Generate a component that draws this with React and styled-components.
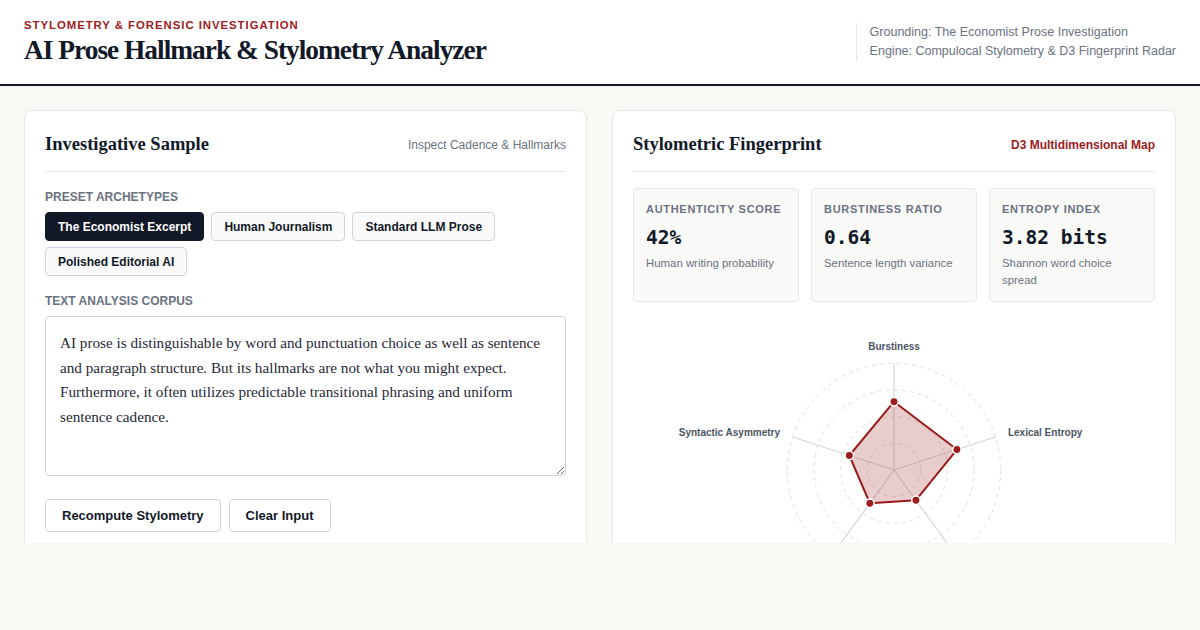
import React, { useState } from 'react';
import styled, { createGlobalStyle } from "styled-components";

const GlobalStyle = createGlobalStyle`
  body {
    margin: 0;
    background: #f9f8f5;
    font-family: "Liberation Sans", Arial, sans-serif;
    color: #111827;
  }
  * { box-sizing: border-box; }
`;

const PRESETS = {
    economist: {
        label: "The Economist Excerpt",
        text: "AI prose is distinguishable by word and punctuation choice as well as sentence and paragraph structure. But its hallmarks are not what you might expect. Furthermore, it often utilizes predictable transitional phrasing and uniform sentence cadence."
    },
    human: { label: "Human Journalism", text: "" },
    llm: { label: "Standard LLM Prose", text: "" },
    polished: { label: "Polished Editorial AI", text: "" },
};

//axes of the fingerprint, values in 0..1
const AXES = [
    { name: "Burstiness", value: 0.64 },
    { name: "Lexical Entropy", value: 0.62 },
    { name: "Punctuation Density", value: 0.35 },
    { name: "Transition Frequency", value: 0.385 },
    { name: "Syntactic Asymmetry", value: 0.44 },
];

const App = () => {
    const [preset, setPreset] = useState("economist");
    const [text, setText] = useState(PRESETS.economist.text);

    return (
        <Page>
            <GlobalStyle />
            <Header>
                <div>
                    <Kicker>Stylometry &amp; Forensic Investigation</Kicker>
                    <Title>AI Prose Hallmark &amp; Stylometry Analyzer</Title>
                </div>
                <Meta>
                    <div>Grounding: The Economist Prose Investigation</div>
                    <div>Engine: Compulocal Stylometry &amp; D3 Fingerprint Radar</div>
                </Meta>
            </Header>

            <Main>
                <Panel>
                    <PanelHead>
                        <h2>Investigative Sample</h2>
                        <span>Inspect Cadence &amp; Hallmarks</span>
                    </PanelHead>

                    <Label>Preset Archetypes</Label>
                    <Chips>
                        {Object.entries(PRESETS).map(([key, p]) => (
                            <Chip
                                key={key}
                                $active={preset === key}
                                onClick={() => { setPreset(key); if (p.text) setText(p.text); }}
                            >
                                {p.label}
                            </Chip>
                        ))}
                    </Chips>

                    <Label>Text Analysis Corpus</Label>
                    <Corpus value={text} onChange={(e) => setText(e.target.value)} />

                    <Actions>
                        <Button>Recompute Stylometry</Button>
                        <Button onClick={() => setText("")}>Clear Input</Button>
                    </Actions>
                </Panel>

                <Panel>
                    <PanelHead $accent>
                        <h2>Stylometric Fingerprint</h2>
                        <span>D3 Multidimensional Map</span>
                    </PanelHead>

                    <Metrics>
                        <Metric label="Authenticity Score" value="42%" note="Human writing probability" />
                        <Metric label="Burstiness Ratio" value="0.64" note="Sentence length variance" />
                        <Metric label="Entropy Index" value="3.82 bits" note="Shannon word choice spread" />
                    </Metrics>

                    <Radar axes={AXES} />
                </Panel>
            </Main>
        </Page>
    );
};

const Metric = ({label, value, note}) => (
    <MetricCard>
        <h4>{label}</h4>
        <strong>{value}</strong>
        <p>{note}</p>
    </MetricCard>
);

const Radar = ({axes}) => {
    const cx = 261, cy = 149, R = 106.7;
    const pt = (i, r) => {
        const a = -Math.PI / 2 + (i * 2 * Math.PI) / axes.length;
        return [cx + Math.cos(a) * r, cy + Math.sin(a) * r];
    };
    const shape = axes.map((ax, i) => pt(i, ax.value * R).join(",")).join(" ");

    return (
        <RadarBox>
            <svg width="522" height="240" viewBox="0 0 522 240">
                {[1, 2, 3, 4].map((k) => (
                    <circle key={k} cx={cx} cy={cy} r={(R * k) / 4}
                        fill="none" stroke="#e0e0e0" strokeDasharray="4 4" />
                ))}
                {axes.map((ax, i) => {
                    const [x, y] = pt(i, R);
                    return <line key={ax.name} x1={cx} y1={cy} x2={x} y2={y} stroke="#d5d6dc" strokeWidth="1.2" />;
                })}
                <polygon points={shape} fill="rgba(155,28,28,0.22)" stroke="#9b1c1c" strokeWidth="2" strokeLinejoin="round" />
                {axes.map((ax, i) => {
                    const [x, y] = pt(i, ax.value * R);
                    return <circle key={ax.name} cx={x} cy={y} r="4.2" fill="#9b1c1c" stroke="#fff" strokeWidth="1.5" />;
                })}
                {axes.map((ax, i) => {
                    const [x, y] = pt(i, 124);
                    const dx = x - cx;
                    const anchor = Math.abs(dx) < 5 ? "middle" : dx > 0 ? "start" : "end";
                    return (
                        <AxisLabel key={ax.name} x={x + (anchor === "start" ? -4 : anchor === "end" ? 4 : 0)} y={y + 4} textAnchor={anchor}>
                            {ax.name}
                        </AxisLabel>
                    );
                })}
            </svg>
        </RadarBox>
    );
};

const Page = styled.div`
    height: 543px;
    overflow: hidden;
`;

const Header = styled.header`
    display: flex;
    justify-content: space-between;
    align-items: center;
    background: #fff;
    padding: 17px 24px 15px 24px;
    height: 86px;
    border-bottom: 2px solid #111827;
`;

const Kicker = styled.div`
    color: #9b1c1c;
    font-size: 11.4px;
    font-weight: 700;
    letter-spacing: 0.95px;
    text-transform: uppercase;
    margin-top: -1px;
`;

const Title = styled.h1`
    margin: 4px 0 0;
    font-family: "Liberation Serif", "Times New Roman", serif;
    font-size: 27.4px;
    font-weight: 700;
    letter-spacing: -1px;
    color: #111827;
`;

const Meta = styled.div`
    border-left: 1px solid #e5e7eb;
    padding: 0 0 0 13px;
    font-size: 12.5px;
    line-height: 19px;
    color: #6b7280;
    margin-top: -2px;
`;

const Main = styled.main`
    display: grid;
    grid-template-columns: 1fr 1fr;
    gap: 25px;
    padding: 24px 24px 0;
`;

const Panel = styled.section`
    background: #fff;
    border: 1px solid #e5e7eb;
    border-radius: 8px;
    padding: 23px 20px 24px;
    min-height: 480px;
`;

const PanelHead = styled.div`
    display: flex;
    justify-content: space-between;
    align-items: center;
    padding-bottom: 16px;
    border-bottom: 1px solid #e5e7eb;
    margin-bottom: 16px;
    h2 {
        margin: 0;
        font-family: "Liberation Serif", "Times New Roman", serif;
        font-size: 18.5px;
        font-weight: 700;
        color: #111827;
    }
    span {
        font-size: 12px;
        color: ${p => p.$accent ? "#9b1c1c" : "#6b7280"};
        font-weight: ${p => p.$accent ? 700 : 400};
    }
`;

const Label = styled.div`
    font-size: 12px;
    line-height: 18px;
    font-weight: 700;
    color: #6b7280;
    text-transform: uppercase;
    margin-bottom: 6px;
`;

const Chips = styled.div`
    display: flex;
    flex-wrap: wrap;
    gap: 6px 7px;
    margin-bottom: 16px;
`;

const Chip = styled.button`
    height: 29px;
    padding: 0 12px;
    border-radius: 4px;
    font-family: "Liberation Sans", Arial, sans-serif;
    font-size: 12px;
    font-weight: 700;
    cursor: pointer;
    border: 1px solid ${p => p.$active ? "#111827" : "#d1d5db"};
    background: ${p => p.$active ? "#111827" : "#fafafa"};
    color: ${p => p.$active ? "#fff" : "#111827"};
`;

const Corpus = styled.textarea`
    display: block;
    width: 100%;
    height: 160px;
    padding: 14px 14px;
    border: 1px solid #d1d5db;
    border-radius: 4px;
    font-family: "Liberation Serif", "Times New Roman", serif;
    font-size: 15.2px;
    line-height: 24.5px;
    color: #1f2937;
    resize: vertical;
    outline: none;
`;

const Actions = styled.div`
    display: flex;
    gap: 8px;
    margin-top: 23px;
`;

const Button = styled.button`
    height: 33px;
    padding: 0 16px;
    background: #fff;
    border: 1px solid #d1d5db;
    border-radius: 4px;
    font-family: "Liberation Sans", Arial, sans-serif;
    font-size: 13px;
    font-weight: 700;
    color: #111827;
    cursor: pointer;
`;

const Metrics = styled.div`
    display: grid;
    grid-template-columns: repeat(3, 1fr);
    gap: 12px;
`;

const MetricCard = styled.div`
    height: 114px;
    padding: 14px 12px;
    background: #f9f9f8;
    border: 1px solid #e5e7eb;
    border-radius: 4px;
    h4 {
        margin: 0;
        font-size: 11px;
        font-weight: 700;
        letter-spacing: 0.7px;
        text-transform: uppercase;
        color: #6b7280;
    }
    strong {
        display: block;
        margin-top: 11px;
        font-family: "DejaVu Sans Mono", "Liberation Mono", monospace;
        font-size: 19.5px;
        font-weight: 700;
        color: #111827;
    }
    p {
        margin: 6px 0 0;
        font-size: 11.4px;
        line-height: 17px;
        color: #6b7280;
    }
`;

const RadarBox = styled.div`
    margin-top: 19px;
    display: flex;
    justify-content: center;
`;

const AxisLabel = styled.text`
    font-family: "Liberation Sans", Arial, sans-serif;
    font-size: 10px;
    font-weight: 700;
    fill: #4b5563;
`;

export default App;
